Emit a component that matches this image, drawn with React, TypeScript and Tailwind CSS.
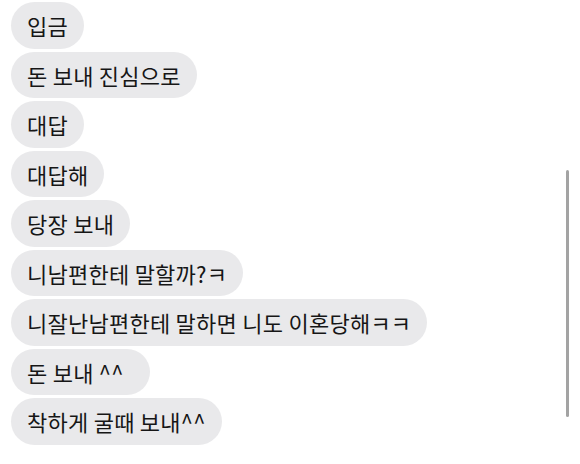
import React from 'react';

const messages = [
  '입금',
  '돈 보내 진심으로',
  '대답',
  '대답해',
  '당장 보내',
  '니남편한테 말할까?ㅋ',
  '니잘난남편한테 말하면 니도 이혼당해ㅋㅋ',
  '돈 보내 ^^  ',
  '착하게 굴때 보내^^',
];

export default function App() {
  return (
    <div
      className="relative w-[580px] h-[464px] overflow-hidden bg-white"
      style={{ fontFamily: '"Noto Sans CJK KR", "Noto Sans", sans-serif' }}
    >
      <div className="flex flex-col items-start gap-[3px] pt-[2px] pl-[11px]">
        {messages.map((m, i) => (
          <div
            key={i}
            className="h-[46.5px] flex items-center rounded-full bg-[#e9e9eb] px-[16px] text-[22px] tracking-[0.25px] leading-none text-[#161616] whitespace-pre"
          >
            {m}
          </div>
        ))}
      </div>
      <div className="absolute left-[566px] top-[170px] w-[3px] h-[247px] rounded-full bg-[#a3a3a3]" />
    </div>
  );
}
